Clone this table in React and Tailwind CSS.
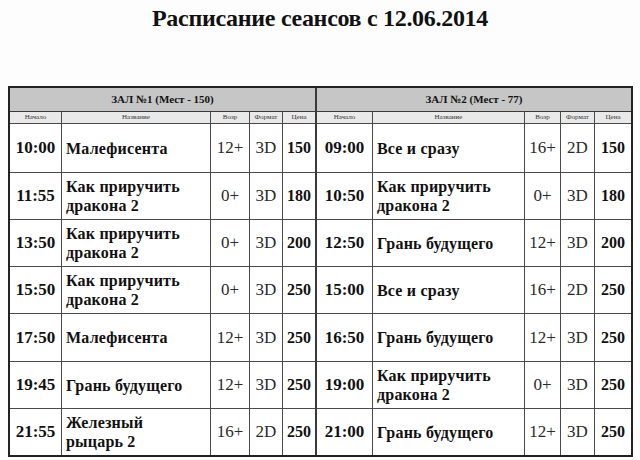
import React from "react";

const left = [
  ["10:00", ["Малефисента"], "12+", "3D", "150"],
  ["11:55", ["Как приручить", "дракона 2"], "0+", "3D", "180"],
  ["13:50", ["Как приручить", "дракона 2"], "0+", "3D", "200"],
  ["15:50", ["Как приручить", "дракона 2"], "0+", "3D", "250"],
  ["17:50", ["Малефисента"], "12+", "3D", "250"],
  ["19:45", ["Грань будущего"], "12+", "3D", "250"],
  ["21:55", ["Железный", "рыцарь 2"], "16+", "2D", "250"],
];
const right = [
  ["09:00", ["Все и сразу"], "16+", "2D", "150"],
  ["10:50", ["Как приручить", "дракона 2"], "0+", "3D", "180"],
  ["12:50", ["Грань будущего"], "12+", "3D", "200"],
  ["15:00", ["Все и сразу"], "16+", "2D", "250"],
  ["16:50", ["Грань будущего"], "12+", "3D", "250"],
  ["19:00", ["Как приручить", "дракона 2"], "0+", "3D", "250"],
  ["21:00", ["Грань будущего"], "12+", "3D", "250"],
];

const cell = "border-b border-r border-[#4a4a4a] flex items-center";

function Row({ r, last, side }) {
  const b = last ? " border-b-0" : "";
  const endR = side === "L" ? " border-r-2 border-r-[#3a3a3a]" : "";
  return (
    <>
      <div className={cell + b + " justify-center font-bold text-[17px]"}>{r[0]}</div>
      <div className={cell + b + " pl-[4px] font-bold text-[16px] leading-[19px] tracking-[0.2px]"}>
        <div>
          {r[1].map((t, i) => (
            <div key={i}>{t}</div>
          ))}
        </div>
      </div>
      <div className={cell + b + " justify-center text-[17px] text-[#2a2a2a]"}>{r[2]}</div>
      <div className={cell + b + " justify-center text-[17px] text-[#2a2a2a]"}>{r[3]}</div>
      <div className={cell + b + endR + " justify-center font-bold text-[16px]" + (side === "R" ? " border-r-0" : "")}>{r[4]}</div>
    </>
  );
}

export default function App() {
  const heads = ["Начало", "Название", "Возр", "Формат", "Цена"];
  return (
    <div
      className="w-[640px] h-[460px] bg-[#fdfdfd] text-[#111] relative overflow-hidden"
      style={{ fontFamily: '"Liberation Serif", "Times New Roman", serif' }}
    >
      <div className="pt-[4px] text-center font-bold text-[24px] leading-[28px] tracking-[-0.3px]">
        Расписание сеансов с 12.06.2014
      </div>
      <div className="ml-[8px] mt-[54px] w-[625px] h-[371px] border-2 border-[#222] bg-white">
        <div className="grid grid-cols-[52px_149px_39px_33px_34px_56px_152px_36px_34px_36px] grid-rows-[24px_12px_49px_47px_47px_47px_48px_47px_46px] h-full">
          <div className="col-span-5 bg-[#c6c6c6] border-b border-r-2 border-[#3a3a3a] flex items-center justify-center font-bold text-[11px]">
            ЗАЛ №1 (Мест - 150)
          </div>
          <div className="col-span-5 bg-[#c6c6c6] border-b border-[#3a3a3a] flex items-center justify-center font-bold text-[11px]">
            ЗАЛ №2 (Мест - 77)
          </div>
          {[0, 1].map((h) =>
            heads.map((t, i) => (
              <div
                key={h + "-" + i}
                className={
                  "bg-[#e9e9e9] border-b border-r border-[#4a4a4a] flex items-center justify-center text-[7px] leading-none text-[#333]" +
                  (h === 0 && i === 4 ? " border-r-2 border-r-[#3a3a3a]" : "") +
                  (h === 1 && i === 4 ? " border-r-0" : "")
                }
              >
                {t}
              </div>
            ))
          )}
          {left.map((r, i) => (
            <React.Fragment key={i}>
              <Row r={r} last={i === 6} side="L" />
              <Row r={right[i]} last={i === 6} side="R" />
            </React.Fragment>
          ))}
        </div>
      </div>
    </div>
  );
}
